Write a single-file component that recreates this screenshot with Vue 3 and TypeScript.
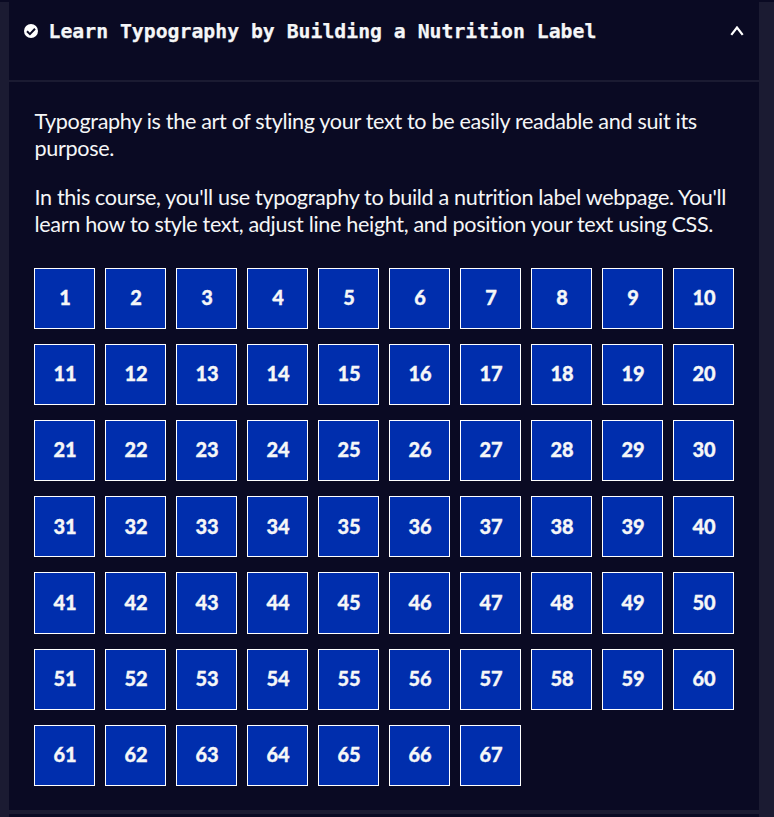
<script setup lang="ts">
import { ref } from 'vue'

const open = ref<boolean>(true)
const stepCount = 67
const paragraphs: string[] = [
  'Typography is the art of styling your text to be easily readable and suit its purpose.',
  "In this course, you'll use typography to build a nutrition label webpage. You'll learn how to style text, adjust line height, and position your text using CSS.",
]
</script>

<template>
  <main class="page">
    <section class="block">
      <button class="header" type="button" :aria-expanded="open" @click="open = !open">
        <svg class="check" viewBox="0 0 14 14" aria-hidden="true">
          <circle cx="7" cy="7" r="7" />
          <path d="M3 7.3 5.9 10.1 11 4.7" />
        </svg>
        <h3 class="title">Learn Typography by Building a Nutrition Label</h3>
        <svg class="caret" viewBox="0 0 14 10" aria-hidden="true">
          <path d="M1.3 8.9 7 1.5 12.7 8.9" />
        </svg>
      </button>
      <div v-if="open" class="content">
        <p v-for="text in paragraphs" :key="text" class="intro">{{ text }}</p>
        <nav class="steps">
          <a v-for="n in stepCount" :key="n" class="step">{{ n }}</a>
        </nav>
      </div>
    </section>
    <div class="next-block"></div>
  </main>
</template>

<style>
body {
  background: #0a0a23;
  overflow: hidden;
}
</style>

<style scoped>
.page {
  box-sizing: border-box;
  height: 817px;
  border-top: 2px solid #0a0a23;
  padding: 0 15px 0 9px;
  background: #1b1b32;
  color: #f5f6f7;
  font-family: Lato, sans-serif;
  overflow: hidden;
}
.block {
  height: 808px;
  background: #0a0a23;
}
.next-block {
  height: 3px;
  margin-top: 4px;
  background: #0a0a23;
}
.header {
  box-sizing: border-box;
  display: flex;
  align-items: flex-start;
  width: 100%;
  height: 80px;
  padding: 17px 15px 0;
  border: 0;
  border-bottom: 2px solid #1b1b32;
  background: transparent;
  color: inherit;
  text-align: left;
}
.check {
  width: 14px;
  height: 14px;
  margin: 5px 10.5px 0 0;
  fill: #fff;
}
.check path {
  fill: none;
  stroke: #0a0a23;
  stroke-width: 2;
}
.title {
  flex: 1;
  margin: 0;
  font: bold 19.8px/26px "DejaVu Sans Mono", monospace;
  white-space: nowrap;
  -webkit-text-stroke: 0.25px currentColor;
}
.caret {
  width: 14px;
  height: 10px;
  margin-top: 7px;
  fill: none;
  stroke: #fff;
  stroke-width: 2.2;
}
.content {
  padding: 26px 25px 0;
}
.intro {
  margin: 0 0 22px;
  padding-left: 0.5px;
  font-size: 21.6px;
  letter-spacing: -0.34px;
  line-height: 27px;
}
.steps {
  display: grid;
  grid-template-columns: repeat(10, 61px);
  gap: 15.02px 10px;
  margin-top: 30px;
}
.step {
  box-sizing: border-box;
  display: flex;
  align-items: center;
  justify-content: center;
  height: 61.1px;
  padding: 0 0 2.6px 1px;
  border: 1px solid #fff;
  background: #002ead;
  font-size: 20px;
  font-weight: 900;
  -webkit-text-stroke: 0.3px currentColor;
}
</style>
